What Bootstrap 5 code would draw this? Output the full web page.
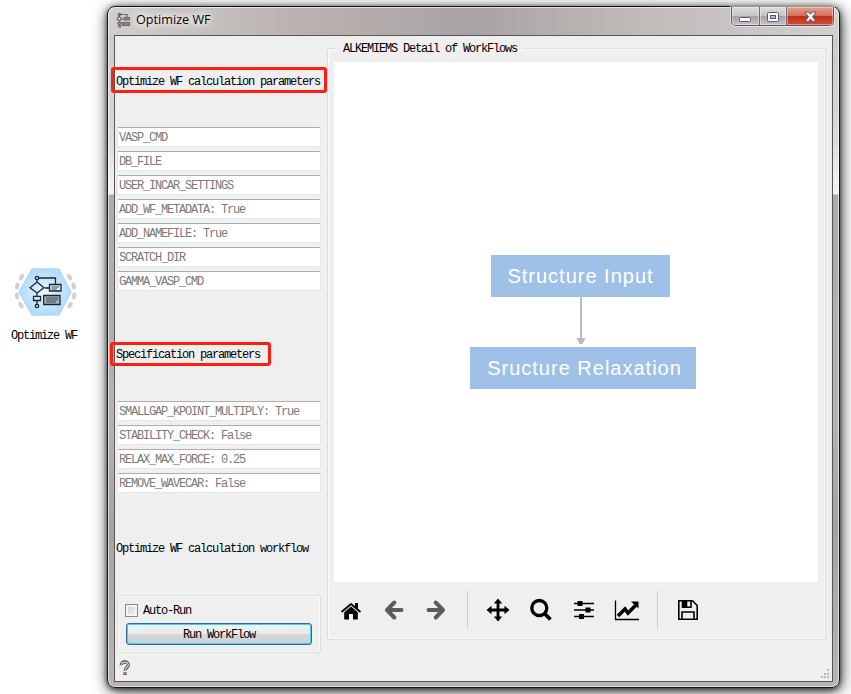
<!DOCTYPE html>
<html lang="en">
<head>
<meta charset="utf-8">
<title>Optimize WF</title>
<link href="https://cdn.jsdelivr.net/npm/bootstrap@5.3.0/dist/css/bootstrap.min.css" rel="stylesheet">
<style>
body{width:851px;height:694px;overflow:hidden;background:#fff;color:#000;font:12px/16px "Liberation Mono",monospace;letter-spacing:-1.2px}
.desk{height:694px;white-space:nowrap;overflow:hidden}
.widget-col{width:107px;padding-top:264px}
.widget-icon{margin-left:10px}
.widget-name{margin-left:11px;margin-top:7px}
.win{width:733px;height:682px;margin-top:6px;border:1px solid #161616;border-radius:8px;padding:0 6px 6px;
 background:linear-gradient(90deg,#d2cecd 0,#bab3b2 25%,#aaa3a3 50%,#c2bcbb 75%,#d2cfce 100%) 0 0/100% 30px no-repeat,linear-gradient(#cbc7c6 0,#d9d6d5 120px,#f5f4f4 187px,#b2abaa 188px,#b8b1b1 420px,#a8a1a1 520px,#bbb4b4 100%);
 box-shadow:inset 0 0 0 1px rgba(255,255,255,.6),0 1px 5px rgba(0,0,0,.6),1px 3px 15px rgba(0,0,0,.8)}
.titlebar{height:28px;padding-left:2px}
.win-title{font:12.6px/18px "Open Sans",sans-serif;letter-spacing:.02px;margin-left:5px;text-shadow:0 0 6px #fff,0 0 9px #fff,0 0 12px #fff}
.caption-btns{height:19px;border:1px solid #59565b;border-top:0;border-radius:0 0 5px 5px;overflow:hidden;margin-right:-1px;box-shadow:0 0 0 1px rgba(255,255,255,.55)}
.cap{width:28px;background:linear-gradient(#dddadd 0,#c8c4c8 48%,#a5a1a7 50%,#c4c0c6 100%);border-right:1px solid #6b686e;box-shadow:inset 0 0 0 1px rgba(255,255,255,.4)}
.cap-max{width:27px}
.cap-close{width:46px;border:0;background:linear-gradient(#e6a090 0,#d4725e 47%,#bd2f17 50%,#cf4f35 100%)}
.client{height:647px;border:1px solid #575556;background:#efefef}
.params{width:212px;padding-left:2px}
.marked{position:relative;z-index:2;border:3px solid #ff1e10;border-radius:3px;padding-left:2px;margin-left:-6px;width:216px;height:26px;margin-top:31px;margin-bottom:34px;line-height:24px}
.marked-spec{width:161px;height:24px;margin:51px 0 35px -7px;padding-left:3px;line-height:21px}
.field{width:204px;height:20px;border:1px solid #e1e5ee;border-top-color:#abadb3;border-radius:2px;background:#fff;color:#7a7a7a;padding:0 0 0 1px;line-height:20px}
.flow-label{margin:48px 0 38px -1px;height:16px}
.groupline{border:1px solid #d3dee7;border-radius:3px;box-shadow:inset 0 0 0 1px #fbfbfb}
.run-box{width:204px;height:58px;padding:7px 8px 0}
.check-row{height:14px}
.check{width:13px;height:13px;margin-left:-1px;border:1px solid #8a8a8a;background:linear-gradient(135deg,#c7cad0,#f6f6f6);box-shadow:inset 0 0 0 2px #f3f3f3}
.check-text{margin-left:5px;padding-top:2px}
.run-btn{width:186px;height:22px;margin-top:6px;border:1px solid #2c6d9e;border-radius:3px;background:linear-gradient(#f2f2f2 0,#e9ebec 48%,#d6dadc 50%,#cacfd2 100%);box-shadow:inset 0 0 0 1px #45cdf5;padding:1px 0 0;color:#000;font:inherit;letter-spacing:inherit}
.help{margin:7px 0 0 2px}
.detail{width:499px;height:592px;margin-top:12px;padding:13px 6px 0}
.detail-title{position:absolute;left:8px;top:-8px;padding:0 7px;background:#efefef}
.canvas{width:484px;height:520px;background:#fff}
.node{position:absolute;height:42px;background:#9fc1e7;color:#fff;font:20px/42px "Liberation Sans",sans-serif;text-align:center}
.node-input{left:157px;top:193px;width:179px;letter-spacing:1px}
.node-relax{left:136px;top:285px;width:226px;letter-spacing:1px;padding-left:3px}
.link-line{position:absolute;left:242px;top:235px}
.tools{height:56px;padding-left:5px;gap:20px}
.tools svg{flex:none}
.sep{width:1px;height:38px;background:#cbcbcb}
.nudge-l{margin-left:-2px}
.nudge-s{margin-left:-1px}
.nudge-t{margin-left:-3px}
.nudge-r{margin-left:1px}
.grip{position:absolute;right:2px;bottom:2px}
</style>
<script src="https://cdn.jsdelivr.net/npm/bootstrap@5.3.0/dist/js/bootstrap.bundle.min.js"></script>
</head>
<body>
<div class="desk d-flex align-items-start">
 <div class="widget-col flex-shrink-0">
  <svg class="d-block widget-icon" width="70" height="57" viewBox="10 264 70 57">
   <defs><radialGradient id="hex"><stop offset="0" stop-color="#e8f5ff"/><stop offset="1" stop-color="#b0dbfb"/></radialGradient></defs>
   <path d="M23 275Q10 292 23 308M68 275Q81 292 68 308" fill="none" stroke="#ccd2d5" stroke-width="4" stroke-linecap="round" stroke-dasharray="3 7" stroke-dashoffset="-1"/>
   <path d="M32 269H59L71 292 59 315H32L19 292Z" fill="url(#hex)" stroke="#b0dbfb" stroke-width="1.5" stroke-linejoin="round"/>
   <g fill="none" stroke="#1c252c" stroke-width="1.3"><path d="M39 278H55.500V284M37 280V283M45 288H49M37 293V296M37 301V304M37 282L44 287.700 37 293 30 287.700Z"/><circle cx="37" cy="278" r="1.700"/><circle cx="37" cy="306" r="1.700"/><path d="M33.500 296.300H40.500V300.500H33.500Z"/><path d="M49.500 284.500H61V291H49.500Z" fill="#dcecf6"/><path d="M43.700 295.500H60V304.500H43.700Z" fill="#a6bac8"/><path d="M51.500 287H59M51.500 289H57M46 298H58M46 300H58M46 302H56" stroke-width=".8"/></g>
  </svg>
  <div class="widget-name">Optimize WF</div>
 </div>
 <main class="win flex-shrink-0">
  <header class="titlebar d-flex align-items-start justify-content-between">
   <div class="d-flex align-items-center pt-1">
    <svg width="15" height="16" viewBox="0 0 15 16" fill="none" stroke="#6c6a6b" stroke-width="1.200"><path d="M4 2.500H11V5M3.500 3V5L6 7 3.500 9 1 7ZM6 7H8M3.500 9V14"/><circle cx="3.500" cy="2.500" r="1.200"/><circle cx="3.500" cy="14" r="1.200"/><path d="M8.500 5.500H13.500V8H8.500ZM6.500 10.500H13.500V13.500H6.500Z" fill="#8a8889"/><path d="M2 10.500H5V12H2Z" fill="#ddd"/></svg>
    <span class="win-title">Optimize WF</span>
   </div>
   <div class="caption-btns d-flex">
    <div class="cap d-flex"><svg class="m-auto" width="13" height="17"><rect x=".5" y="9.500" width="11" height="4" rx="1" fill="#fff" stroke="#555866"/></svg></div>
    <div class="cap cap-max d-flex"><svg class="m-auto" width="12" height="17"><rect x=".5" y="4.500" width="11" height="9" rx="1" fill="#fff" stroke="#555866"/><rect x="3.500" y="7.500" width="5" height="3" fill="#bbb" stroke="#555866"/></svg></div>
    <div class="cap cap-close d-flex"><svg class="m-auto" width="13" height="17" viewBox="0 0 13 17"><path d="M1 4H4.500L6.500 6.300 8.500 4H12L8.500 8.700 12 13.400H8.500L6.500 11 4.500 13.400H1L4.500 8.700Z" fill="#fff" stroke="#555866" stroke-linejoin="round"/></svg></div>
   </div>
  </header>
  <section class="client d-flex position-relative">
   <div class="params flex-shrink-0">
    <div class="marked">Optimize WF calculation parameters</div>
    <div class="d-flex flex-column gap-1">
     <div class="field">VASP_CMD</div>
     <div class="field">DB_FILE</div>
     <div class="field">USER_INCAR_SETTINGS</div>
     <div class="field">ADD_WF_METADATA: True</div>
     <div class="field">ADD_NAMEFILE: True</div>
     <div class="field">SCRATCH_DIR</div>
     <div class="field">GAMMA_VASP_CMD</div>
    </div>
    <div class="marked marked-spec">Specification parameters</div>
    <div class="d-flex flex-column gap-1">
     <div class="field">SMALLGAP_KPOINT_MULTIPLY: True</div>
     <div class="field">STABILITY_CHECK: False</div>
     <div class="field">RELAX_MAX_FORCE: 0.25</div>
     <div class="field">REMOVE_WAVECAR: False</div>
    </div>
    <div class="flow-label">Optimize WF calculation workflow</div>
    <div class="run-box groupline">
     <div class="d-flex align-items-center check-row"><span class="check"></span><span class="check-text">Auto-Run</span></div>
     <button class="run-btn d-block">Run WorkFlow</button>
    </div>
    <svg class="d-block help" width="12" height="16" viewBox="0 0 12 16"><path d="M2.300 5.200C2 .8 9.500 .8 9.300 5 9.200 7.600 6 7.300 6 10.500M6 12.200V15" fill="none" stroke="#444" stroke-width="3.200"/><path d="M2.300 4.700C2.500 1.200 9.500 1.200 9.300 5 9.200 7.600 6 7.300 6 10M6 12.700V14.300" fill="none" stroke="#d9d9d9" stroke-width="1.300"/></svg>
   </div>
   <div class="detail groupline position-relative flex-shrink-0">
    <div class="detail-title">ALKEMIEMS Detail of WorkFlows</div>
    <div class="canvas position-relative">
     <div class="node node-input">Structure Input</div>
     <svg class="link-line" width="10" height="50"><path d="M5 0V41" stroke="#bdbdbd" stroke-width="2"/><path d="M.5 41H9.500L6.500 47H3.500Z" fill="#b9b9b9"/></svg>
     <div class="node node-relax">Sructure Relaxation</div>
    </div>
    <div class="tools d-flex align-items-center">
     <svg width="24" height="24" viewBox="0 0 24 24"><path d="M12 8.500L18.800 14.300V21.500H14V16H10V21.500H5.200V14.300Z"/><path d="M2.500 14L12 6 21.500 14" fill="none" stroke="#000" stroke-width="1.800"/><path d="M16 5H19V11L16 8.500Z"/></svg>
     <svg width="22" height="22" viewBox="0 0 22 22" fill="none" stroke="#5c5c5c" stroke-width="4" stroke-linejoin="round" stroke-linecap="round"><path d="M11.300 3.500L4 11 11.300 18.500M4.500 11H18.500"/></svg>
     <svg width="22" height="22" viewBox="0 0 22 22" fill="none" stroke="#5c5c5c" stroke-width="4" stroke-linejoin="round" stroke-linecap="round"><path d="M10.700 3.500L18 11 10.700 18.500M17.500 11H3.500"/></svg>
     <span class="sep"></span>
     <svg class="nudge-l" width="24" height="24" viewBox="0 0 24 24"><path d="M12 3V21M3 12H21" stroke="#000" stroke-width="2.800"/><path d="M12 .5L16.200 5.500H7.800ZM12 23.500L16.200 18.500H7.800ZM.5 12L5.500 7.800V16.200ZM23.500 12L18.500 7.800V16.200Z"/></svg>
     <svg class="nudge-s" width="24" height="24" viewBox="0 0 24 24" fill="none" stroke="#000"><circle cx="10.300" cy="10" r="7.500" stroke-width="3.300"/><path d="M15.500 15.500L21.500 21.500" stroke-width="3.700"/></svg>
     <svg class="nudge-r" width="20" height="20" viewBox="0 0 20 20"><path d="M0 3.500H20M0 10H20M0 16.500H20" stroke="#000" stroke-width="1.600"/><path d="M3.500 1H8.500V6H3.500ZM11.500 7.500H16.500V12.500H11.500ZM5 14H10V19H5Z"/></svg>
     <svg width="26" height="22" viewBox="0 0 26 22" fill="none" stroke="#000"><path d="M1.500 1.500V20.500H25" stroke-width="1.300"/><path d="M4 17L11 10 14 14 21.500 6.500" stroke-width="3.500"/><path d="M17 2.500H24.500V9.500Z" fill="#000" stroke="none"/></svg>
     <span class="sep nudge-t"></span>
     <svg width="20" height="20" viewBox="0 0 20 20" fill="none" stroke="#000" stroke-width="1.600"><path d="M.8 .8H14.500L19.200 5.500V19.200H.8ZM4 19V12H16V19M4.500 1V7.200H13V1"/><path d="M5 1H8.500V7H5Z" fill="#000"/></svg>
    </div>
   </div>
   <svg class="grip" width="10" height="10" fill="#b8b8b8"><path d="M7 0h2v2h-2zM4 4h2v2h-2zM7 4h2v2h-2zM1 7h2v2h-2zM4 7h2v2h-2zM7 7h2v2h-2z"/></svg>
  </section>
 </main>
</div>
</body>
</html>
